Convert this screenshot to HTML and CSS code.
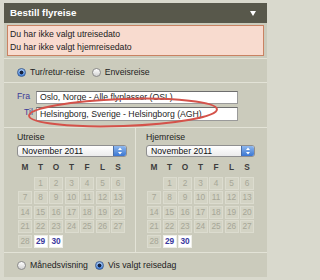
FILE: index.html
```html
<!DOCTYPE html>
<html>
<head>
<meta charset="utf-8">
<link rel="stylesheet" href="styles.css">
</head>
<body>
<div class="panel">
  <div class="hdr"><span class="title">Bestill flyreise</span><span class="tri"></span></div>
  <div class="err">Du har ikke valgt utreisedato<br>Du har ikke valgt hjemreisedato</div>
  <div class="sec opts top">
    <span class="radio on"></span><span class="lbl">Tur/retur-reise</span>
    <span class="radio"></span><span class="lbl">Enveisreise</span>
  </div>
  <div class="sec route">
    <div class="row"><span class="rl">Fra</span><div class="inp fra">Oslo, Norge - Alle flyplasser (OSL)</div></div>
    <div class="row"><span class="rl til">Til</span><div class="inp">Helsingborg, Sverige - Helsingborg (AGH)</div></div>
  </div>
  <div class="sec cals">
    <div class="cal left">
      <div class="clabel">Utreise</div>
      <div class="sel"><span class="stext">November 2011</span><span class="btn"><svg width="12" height="10" viewBox="0 0 12 10"><path d="M4 4 L6 1.6 L8 4 Z M4 6 L6 8.4 L8 6 Z" fill="#fff"/></svg></span></div>
      <div class="dow"><span>M</span><span>T</span><span>O</span><span>T</span><span>F</span><span>L</span><span>S</span></div>
      <div class="grid">
        <span class="e"></span><span>1</span><span>2</span><span>3</span><span>4</span><span>5</span><span>6</span>
        <span>7</span><span>8</span><span>9</span><span>10</span><span>11</span><span>12</span><span>13</span>
        <span>14</span><span>15</span><span>16</span><span>17</span><span>18</span><span>19</span><span>20</span>
        <span>21</span><span>22</span><span>23</span><span>24</span><span>25</span><span>26</span><span>27</span>
        <span>28</span><span class="a">29</span><span class="a">30</span>
      </div>
    </div>
    <div class="cal right">
      <div class="clabel">Hjemreise</div>
      <div class="sel"><span class="stext">November 2011</span><span class="btn"><svg width="12" height="10" viewBox="0 0 12 10"><path d="M4 4 L6 1.6 L8 4 Z M4 6 L6 8.4 L8 6 Z" fill="#fff"/></svg></span></div>
      <div class="dow"><span>M</span><span>T</span><span>O</span><span>T</span><span>F</span><span>L</span><span>S</span></div>
      <div class="grid">
        <span class="e"></span><span>1</span><span>2</span><span>3</span><span>4</span><span>5</span><span>6</span>
        <span>7</span><span>8</span><span>9</span><span>10</span><span>11</span><span>12</span><span>13</span>
        <span>14</span><span>15</span><span>16</span><span>17</span><span>18</span><span>19</span><span>20</span>
        <span>21</span><span>22</span><span>23</span><span>24</span><span>25</span><span>26</span><span>27</span>
        <span>28</span><span class="a">29</span><span class="a">30</span>
      </div>
    </div>
  </div>
  <div class="sec opts bottom">
    <span class="radio"></span><span class="lbl">Månedsvisning</span>
    <span class="radio on"></span><span class="lbl">Vis valgt reisedag</span>
  </div>
</div>
<svg class="ring" width="268" height="280" viewBox="0 0 268 280">
  <ellipse cx="123" cy="112.5" rx="94" ry="13.5" transform="rotate(-2 123 112.5)" fill="none" stroke="#d4524a" stroke-width="2"/>
</svg>
</body>
</html>
```

FILE: styles.css
```css
html, body {
  margin: 0;
  padding: 0;
}
body {
  width: 268px;
  height: 280px;
  background: #d9d9cd;
  position: relative;
  overflow: hidden;
  font-family: "Liberation Sans", Arial, sans-serif;
  font-size: 8.7px;
  color: #222;
}
.panel {
  position: absolute;
  left: 4px;
  top: 3px;
  width: 263px;
  height: 274px;
  background: #cbcbbc;
  box-sizing: border-box;
}
.hdr {
  height: 20px;
  background: #58584b;
  display: flex;
  align-items: center;
  padding-left: 6px;
}
.title {
  color: #fff;
  font-weight: bold;
  font-size: 9.8px;
  line-height: 20px;
}
.tri {
  margin-left: auto;
  margin-right: 11px;
  width: 0;
  height: 0;
  border-left: 3px solid transparent;
  border-right: 3px solid transparent;
  border-top: 5px solid #fff;
}
.err {
  margin: 2px 3px 0 3px;
  height: 31px;
  box-sizing: border-box;
  border: 1px solid #c98262;
  background: #f8dbcf;
  padding: 2px 0 0 2px;
  line-height: 12.5px;
  color: #222;
}
.sec {
  border-top: 1px solid #e3e3d7;
}
.opts {
  margin-top: 2px;
  height: 23px;
  display: flex;
  align-items: center;
  padding: 3px 0 0 13px;
  box-sizing: content-box;
}
.opts.bottom {
  margin-top: 0;
  height: 23px;
  padding-top: 2px;
  box-sizing: border-box;
}
.opts.top {
  height: 20px;
}
.radio {
  width: 9px;
  height: 9px;
  border-radius: 50%;
  box-sizing: border-box;
  border: 1px solid #8a8a8a;
  background: linear-gradient(#ffffff, #d2d2d2);
  flex: none;
}
.radio.on {
  border-color: #3d5f95;
  background: radial-gradient(circle, #17233f 0 1.7px, transparent 2.2px), linear-gradient(#a8c9f2, #3f7ed8);
}
.lbl {
  margin-left: 4px;
  margin-right: 7px;
  line-height: 12px;
}
.route {
  height: 45px;
  padding-top: 8px;
  box-sizing: border-box;
  padding-left: 13px;
}
.row {
  display: flex;
  align-items: flex-start;
  margin-bottom: 3px;
}
.rl {
  width: 19px;
  color: #3b3b98;
  line-height: 11px;
  font-size: 8.7px;
}
.rl.til {
  padding-left: 7px;
  width: 12px;
}
.inp {
  width: 202px;
  height: 14px;
  box-sizing: border-box;
  background: #fff;
  border: 1px solid #9a9a9a;
  border-top-color: #6e6e6e;
  padding-left: 3px;
  line-height: 12px;
  color: #1e1e1e;
  white-space: nowrap;
}
.inp.fra {
  height: 13px;
  line-height: 11px;
}
.cals {
  height: 125px;
  box-sizing: border-box;
  display: flex;
}
.cal {
  padding-top: 4px;
  box-sizing: border-box;
}
.cal.left {
  width: 132px;
  padding-left: 13px;
  border-right: 1px solid #e3e3d7;
}
.cal.right {
  width: 130px;
  padding-left: 10px;
}
.clabel {
  line-height: 11px;
  color: #222;
}
.sel {
  margin-top: 2px;
  width: 110px;
  height: 12px;
  box-sizing: border-box;
  border: 1px solid #8f8f8f;
  border-radius: 3px;
  background: linear-gradient(#ffffff, #ececec);
  display: flex;
  align-items: center;
  overflow: hidden;
}
.right .sel {
  width: 109px;
}
.stext {
  padding-left: 4px;
  line-height: 10px;
  color: #111;
  flex: 1;
}
.btn {
  width: 12px;
  height: 10px;
  background: linear-gradient(#8fb8ee, #3a76d2);
  border-left: 1px solid #4a6ea8;
  display: flex;
}
.dow {
  margin-top: 5px;
  margin-left: 1px;
  display: grid;
  grid-template-columns: repeat(7, 14px);
  column-gap: 1.5px;
  line-height: 10px;
  height: 10px;
}
.dow span {
  text-align: center;
  font-weight: bold;
  color: #3c3c3c;
  font-size: 8.3px;
}
.grid {
  margin-top: 4.5px;
  margin-left: 1px;
  display: grid;
  grid-template-columns: repeat(7, 14px);
  grid-auto-rows: 13px;
  gap: 1.5px;
}
.grid span {
  box-sizing: border-box;
  border: 1px solid #dcdccf;
  background: #d3d3c4;
  color: #a6a697;
  text-align: center;
  line-height: 11px;
  font-size: 8.3px;
}
.grid span.e {
  border: none;
  background: transparent;
}
.grid span.a {
  background: #ffffff;
  border-color: #efefe8;
  color: #3a3a9e;
  font-weight: bold;
}
.ring {
  position: absolute;
  left: 0;
  top: 0;
  pointer-events: none;
}
```
